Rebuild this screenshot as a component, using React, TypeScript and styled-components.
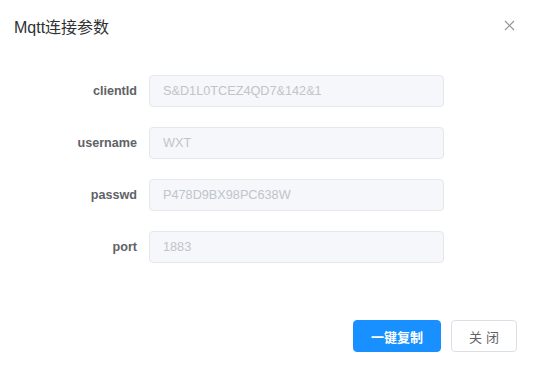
import styled, { createGlobalStyle } from "styled-components"

const GlobalStyle = createGlobalStyle`
    html, body {
        margin: 0;
        padding: 0;
        background: #ffffff;
    }
    * {
        box-sizing: border-box;
    }
`

const Dialog = styled.div`
    width: 534px;
    height: 366px;
    background: #ffffff;
    font-family: "Liberation Sans", Arial, "Noto Sans CJK SC", sans-serif;
    display: flex;
    flex-direction: column;
`

const Header = styled.div`
    display: flex;
    align-items: center;
    justify-content: space-between;
    padding: 16px 18px 10px 14px;
`

const Title = styled.span`
    font-size: 16px;
    line-height: 24px;
    color: #303133;
`

const CloseButton = styled.button`
    border: none;
    background: transparent;
    padding: 0;
    width: 14px;
    height: 14px;
    display: flex;
    align-items: center;
    justify-content: center;
    margin-top: -6px;
    cursor: pointer;
`

const Form = styled.div`
    display: flex;
    flex-direction: column;
    gap: 20px;
    padding: 25px 0 0 57px;
`

const FormItem = styled.div`
    display: flex;
    align-items: center;
`

const Label = styled.label`
    width: 92px;
    padding-right: 12px;
    text-align: right;
    font-size: 12.6px;
    font-weight: bold;
    color: #606266;
`

const Input = styled.input`
    width: 295px;
    height: 32px;
    border: 1px solid #e4e7ed;
    border-radius: 4px;
    background: #f5f7fa;
    padding: 0 13px;
    font-family: inherit;
    font-size: 12.7px;
    color: #c0c4cc;
    outline: none;

    &:disabled {
        color: #c0c4cc;
        -webkit-text-fill-color: #c0c4cc;
    }
`

const Footer = styled.div`
    display: flex;
    justify-content: flex-end;
    gap: 10px;
    padding: 57px 17px 0 0;
`

const Button = styled.button<{ $primary?: boolean }>`
    height: 32px;
    border-radius: 4px;
    font-family: inherit;
    font-size: 13px;
    cursor: pointer;
    border: 1px solid ${p => (p.$primary ? "#1890ff" : "#dcdfe6")};
    background: ${p => (p.$primary ? "#1890ff" : "#ffffff")};
    color: ${p => (p.$primary ? "#ffffff" : "#606266")};
    font-weight: ${p => (p.$primary ? "bold" : "normal")};
    width: ${p => (p.$primary ? "88px" : "66px")};
    letter-spacing: ${p => (p.$primary ? "0" : "4px")};
    text-indent: ${p => (p.$primary ? "0" : "4px")};
`

const fields = [
    { label: "clientId", value: "S&D1L0TCEZ4QD7&142&1" },
    { label: "username", value: "WXT" },
    { label: "passwd", value: "P478D9BX98PC638W" },
    { label: "port", value: "1883" },
]

export default function App() {
    return (
        <>
            <GlobalStyle />
            <Dialog>
                <Header>
                    <Title>Mqtt连接参数</Title>
                    <CloseButton aria-label="close">
                        <svg width="11" height="11" viewBox="0 0 11 11">
                            <path d="M1 1 L10 10 M10 1 L1 10" stroke="#909399" strokeWidth="1.1" fill="none" />
                        </svg>
                    </CloseButton>
                </Header>
                <Form>
                    {fields.map(f => (
                        <FormItem key={f.label}>
                            <Label>{f.label}</Label>
                            <Input value={f.value} disabled readOnly />
                        </FormItem>
                    ))}
                </Form>
                <Footer>
                    <Button $primary>一键复制</Button>
                    <Button>关闭</Button>
                </Footer>
            </Dialog>
        </>
    )
}
